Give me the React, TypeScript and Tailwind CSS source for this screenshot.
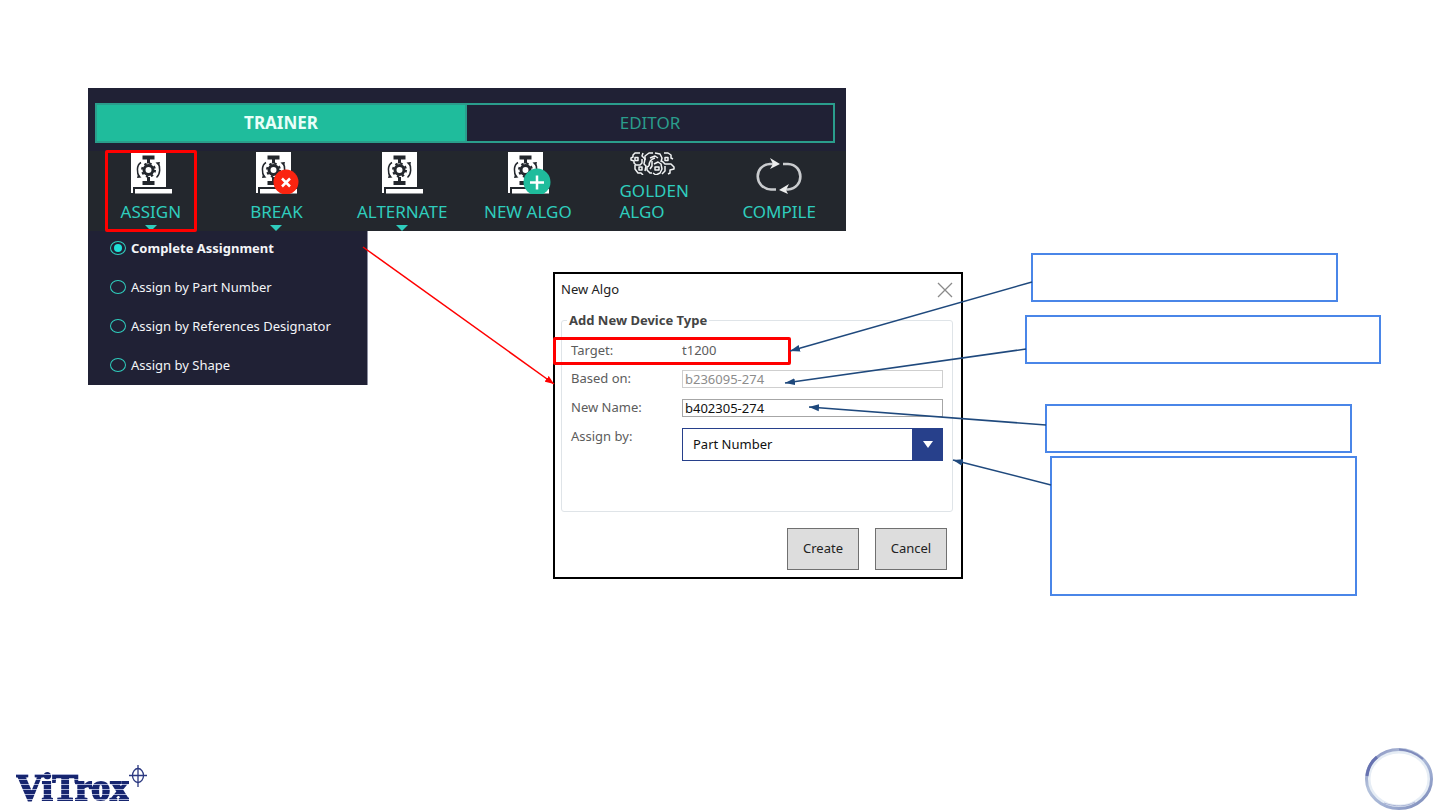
import { useState } from 'react'
import type { ReactNode } from 'react'

const assignModes = [
  'Complete Assignment',
  'Assign by Part Number',
  'Assign by References Designator',
  'Assign by Shape',
]

function AlgoIcon({ children }: { children?: ReactNode }) {
  return (
    <svg width="46" height="42" viewBox="-1 0 46 42" className="block" aria-hidden="true">
      <path d="M2 0H37V35H4V41H2Z" fill="#fff" />
      <path d="M6 37H43V41.500H6Z" fill="#fff" />
      <g fill="#23272d">
        <path d="M13.500 3.500h12v4h-4.500v4h-3v-4h-4.500z" />
        <path d="M13.500 33h12v-4h-4.500v-4h-3v4h-4.500z" />
      </g>
      <circle cx="19.500" cy="18" r="4.500" fill="none" stroke="#23272d" strokeWidth="3" />
      <circle
        cx="19.500"
        cy="18"
        r="6.500"
        fill="none"
        stroke="#23272d"
        strokeWidth="2"
        strokeDasharray="2.400 2.705"
      />
      <g fill="none" stroke="#23272d" strokeWidth="1.500">
        <path d="M12 10.500C7.500 13 7.500 21 10.500 25" />
        <path d="M27.500 25.500C31.500 22 31.500 14.500 29 11" />
      </g>
      <path d="M8 26l1-4 3.500 3.500z M31 10l-1 4-3.500-3.500z" fill="#23272d" />
      {children}
    </svg>
  )
}

function BreakIcon() {
  return (
    <AlgoIcon>
      <circle cx="32" cy="30" r="12.500" fill="#fa2410" />
      <path d="M28 26.500l8 8M36 26.500l-8 8" stroke="#fff" strokeWidth="2.500" />
    </AlgoIcon>
  )
}

function NewAlgoIcon() {
  return (
    <AlgoIcon>
      <circle cx="31" cy="30" r="13.500" fill="#1fbc9c" />
      <path d="M31 23.500v14M24 30.500h14" stroke="#fff" strokeWidth="2.500" />
    </AlgoIcon>
  )
}

function GoldenIcon() {
  return (
    <svg width="46" height="23" viewBox="0 0 46 23" className="block" aria-hidden="true">
      <g fill="none" stroke="#f1f3f4" strokeWidth="1.500" strokeLinejoin="round">
        <path d="M10 1H5L3 3v2L1 6v2l3 1v2l2 2h4l2-2V7" />
        <path d="M5 5.500h3v3H5zM9 15h3v3H9z" />
        <path d="M5 13v4l3 4h3l2 2M13 1l-1 3 3 3-1 5 2 2-1 5" />
        <path d="M23 1h-4l-4 3v4M20 6l5-2 3 2M19 14c0-4 2-7 6-8" />
        <path d="M19 14l-2 1v3l3 3h2M22 9v5l-2 3" />
        <path d="M24 12l4-2 3 2 1 5-2 4-4 2-3-2" />
        <path d="M25 15h4v3h-4zM25 1l5 1 2 4-1 4" />
        <path d="M34 1h4l3 2v3l2 1M35 5.500h3v3h-3z" />
        <path d="M32 9l3 3h6l3 3v2l-4 1v3l-2 1M35 14v5l-3 3" />
      </g>
    </svg>
  )
}

function CompileIcon() {
  return (
    <svg width="46" height="36" viewBox="0 0 46 36" className="block" aria-hidden="true">
      <g fill="none" stroke="#c9cbce" strokeWidth="2.600">
        <path d="M20 31.500H15C-2.500 30 -2.500 7 14 6h4" />
        <path d="M27 6h5C48.500 7 48.500 30 32 31.500h-3" />
      </g>
      <path d="M14 0l10 6-10 5 3-5z M33 26l-10 6 9 4-2-4z" fill="#eceded" />
    </svg>
  )
}

const tools = [
  { label: 'ASSIGN', icon: <AlgoIcon />, menu: true, marked: true },
  { label: 'BREAK', icon: <BreakIcon />, menu: true },
  { label: 'ALTERNATE', icon: <AlgoIcon />, menu: true },
  { label: 'NEW ALGO', icon: <NewAlgoIcon /> },
  { label: 'GOLDEN ALGO', icon: <GoldenIcon /> },
  { label: 'COMPILE', icon: <CompileIcon /> },
]

function Toolbar() {
  return (
    <section className="w-[758px] bg-[#202135] pt-[15px]">
      <div className="mr-[11px] ml-[7px] grid h-10 grid-cols-2 border-2 border-[#2a9d8c] text-[17px]">
        <button type="button" className="bg-[#1fbc9c] pb-px font-bold text-[#e9fff9]">
          TRAINER
        </button>
        <button type="button" className="border-l-2 border-[#2a9d8c] pb-px text-[#2a9d8c]">
          EDITOR
        </button>
      </div>
      <div className="mt-2 bg-[#23272d] pr-1">
        <div className="grid grid-cols-6">
          {tools.map((tool) => (
            <button
              key={tool.label}
              type="button"
              className="relative flex h-20 flex-col items-center justify-between px-4 pt-px pb-[9px] text-[17px] leading-[21px] text-[#2fcdbd]"
            >
              <span className={tool.label === 'COMPILE' ? 'pt-[6px]' : ''}>{tool.icon}</span>
              <span
                className={
                  tool.label === 'GOLDEN ALGO' ? 'w-[68px] text-left' : 'whitespace-nowrap'
                }
              >
                {tool.label}
              </span>
              {tool.menu && (
                <svg
                  width="12"
                  height="6"
                  viewBox="0 0 12 6"
                  className="absolute bottom-0 left-1/2 -translate-x-1/2"
                  aria-hidden="true"
                >
                  <path d="M0 0h12L6 6z" fill="#2fcdbd" />
                </svg>
              )}
              {tool.marked && (
                <span className="absolute inset-x-[17px] -top-px -bottom-px rounded-[2px] border-3 border-[#ff0000]" />
              )}
            </button>
          ))}
        </div>
      </div>
    </section>
  )
}

function AssignMenu() {
  const [mode, setMode] = useState(assignModes[0])

  return (
    <div className="flex w-[280px] shrink-0 flex-col gap-[17px] self-start border-r border-[#8d8fa0] bg-[#202135] pt-[6px] pb-[9px] pl-[22px] text-[13px] leading-[22px] text-[#f4f5f8]">
      {assignModes.map((item) => (
        <label key={item} className="flex items-center gap-[5px]">
          <input
            type="radio"
            name="assign-mode"
            checked={mode === item}
            onChange={() => setMode(item)}
            className="flex h-[14px] w-4 appearance-none items-center justify-center rounded-[50%] border border-[#2fcdbd] checked:before:size-2 checked:before:rounded-full checked:before:bg-[#1fe0d8]"
          />
          <span className={mode === item ? 'font-bold' : ''}>{item}</span>
        </label>
      ))}
    </div>
  )
}

function NewAlgoDialog() {
  const [name, setName] = useState('b402305-274')

  return (
    <section className="relative mt-[41px] ml-[185px] w-[410px] shrink-0 self-start border-2 border-black bg-white pr-2 pb-[7px] pl-[6px] text-[13px] text-[#5c5c5c]">
      <header className="flex h-8 items-center justify-between">
        <h2 className="text-[#222]">New Algo</h2>
        <button type="button" aria-label="Close">
          <svg width="16" height="16" viewBox="0 0 16 16" aria-hidden="true">
            <path d="M1 1l14 14M15 1L1 15" stroke="#8a8a8a" strokeWidth="1.300" />
          </svg>
        </button>
      </header>

      <fieldset className="mt-[5px] rounded-[3px] border border-[#dfe4e8] px-[9px] pb-[50px]">
        <legend className="-ml-1 px-[2px] leading-[18px] font-bold text-[#444]">
          Add New Device Type
        </legend>
        <div className="mt-[13px] grid grid-cols-[111px_1fr] gap-y-[11px] leading-[17px]">
          <span>Target:</span>
          <span>t1200</span>
          <label htmlFor="based-on">Based on:</label>
          <input
            id="based-on"
            defaultValue="b236095-274"
            disabled
            className="h-[18px] border border-[#cfcfcf] px-[2px] text-[#8c8c8c]"
          />
          <label htmlFor="new-name">New Name:</label>
          <input
            id="new-name"
            value={name}
            onChange={(e) => setName(e.target.value)}
            className="h-[18px] border border-[#a6a6a6] px-[2px] text-[#111]"
          />
          <label htmlFor="assign-by">Assign by:</label>
          <div className="relative h-[33px]">
            <select
              id="assign-by"
              className="h-full w-full appearance-none border border-[#27408b] bg-white px-[10px] text-[#111]"
            >
              <option>Part Number</option>
              <option>Shape</option>
            </select>
            <span className="pointer-events-none absolute inset-y-0 right-0 flex w-[31px] items-center justify-center bg-[#27408b]">
              <svg width="10" height="7" viewBox="0 0 10 7" aria-hidden="true">
                <path d="M0 0h10L5 7z" fill="#fff" />
              </svg>
            </span>
          </div>
        </div>
      </fieldset>

      <div className="mt-4 mr-[6px] flex justify-end gap-4 text-[#222]">
        <button type="button" className="h-[42px] w-[72px] border border-[#707070] bg-[#dddddd]">
          Create
        </button>
        <button type="button" className="h-[42px] w-[72px] border border-[#707070] bg-[#dddddd]">
          Cancel
        </button>
      </div>

      <span className="pointer-events-none absolute top-[63px] -left-[2px] h-7 w-[238px] rounded-[2px] border-3 border-[#ff0000]" />
    </section>
  )
}

function Callouts() {
  return (
    <div className="mt-[22px] ml-[62px] flex w-[356px] shrink-0 flex-col">
      <div className="ml-[6px] h-[49px] w-[307px] border-2 border-[#4a86e8]" />
      <div className="mt-[13px] h-[49px] border-2 border-[#4a86e8]" />
      <div className="mt-10 ml-5 h-[49px] w-[307px] border-2 border-[#4a86e8]" />
      <div className="mt-[3px] ml-[25px] h-[140px] w-[307px] border-2 border-[#4a86e8]" />
    </div>
  )
}

function Connectors() {
  return (
    <svg className="pointer-events-none absolute inset-0 h-full w-full" aria-hidden="true">
      <defs>
        <marker id="tip-blue" markerUnits="userSpaceOnUse" markerWidth="11" markerHeight="8" refX="10" refY="4" orient="auto">
          <path d="M0 0.500L10 4L0 7.500Z" fill="#1f497d" />
        </marker>
        <marker id="tip-red" markerUnits="userSpaceOnUse" markerWidth="10" markerHeight="8" refX="9" refY="4" orient="auto">
          <path d="M0 0.500L9 4L0 7.500Z" fill="#ff0000" />
        </marker>
      </defs>
      <path d="M363 247L554 384" stroke="#ff0000" strokeWidth="1.500" markerEnd="url(#tip-red)" />
      <g stroke="#1f497d" strokeWidth="1.500">
        <path d="M1032 282L790 351" markerEnd="url(#tip-blue)" />
        <path d="M1026 349L785 383" markerEnd="url(#tip-blue)" />
        <path d="M1046 425L809 407" markerEnd="url(#tip-blue)" />
        <path d="M1051 485L953 460" markerEnd="url(#tip-blue)" />
      </g>
    </svg>
  )
}

function Footer() {
  return (
    <footer className="flex items-end justify-between pr-[6px] pl-4">
      <div className="flex items-start">
        <span className="bg-[repeating-linear-gradient(to_bottom,#16256f_0px,#16256f_4px,#a9b0d6_4px,#a9b0d6_5px)] bg-clip-text font-['Liberation_Serif',serif] text-[38px] leading-[45px] font-bold text-transparent [-webkit-text-stroke:2px_transparent]">
          ViTrox
        </span>
        <svg width="18" height="22" viewBox="0 0 18 22" aria-hidden="true">
          <g fill="none" stroke="#2b3880" strokeWidth="1.300">
            <ellipse cx="9" cy="10.500" rx="5.500" ry="7" />
            <path d="M9 0v22M0 10.500h18" />
          </g>
        </svg>
      </div>
      <svg width="70" height="63" viewBox="0 0 70 63" aria-hidden="true">
        <defs>
          <linearGradient id="ring" x1="0" y1="0" x2="1" y2="1">
            <stop offset="0" stopColor="#7f88bb" />
            <stop offset="0.350" stopColor="#b5c3dc" />
            <stop offset="0.700" stopColor="#9aa9cf" />
            <stop offset="1" stopColor="#7684b4" />
          </linearGradient>
        </defs>
        <g fill="none">
          <ellipse cx="35" cy="32" rx="30" ry="27" stroke="#e6edf5" strokeWidth="3" />
          <ellipse cx="35" cy="32" rx="32.500" ry="29.500" stroke="url(#ring)" strokeWidth="3" />
          <path d="M3 29C4 20 8 14 13 10" stroke="#6772b0" strokeWidth="3" />
          <path d="M35 2.500C46 3 54 8 59 12" stroke="#7f8abb" strokeWidth="2" />
          <path d="M20 56C31 60 42 60 51 55" stroke="#aab4d6" strokeWidth="1" />
        </g>
      </svg>
    </footer>
  )
}

export default function App() {
  return (
    <div className="flex min-h-screen flex-col justify-between overflow-x-hidden bg-white font-['Noto_Sans',sans-serif]">
      <main className="relative pt-[88px] pl-[88px]">
        <Toolbar />
        <div className="flex">
          <AssignMenu />
          <NewAlgoDialog />
          <Callouts />
        </div>
        <Connectors />
      </main>
      <Footer />
    </div>
  )
}
